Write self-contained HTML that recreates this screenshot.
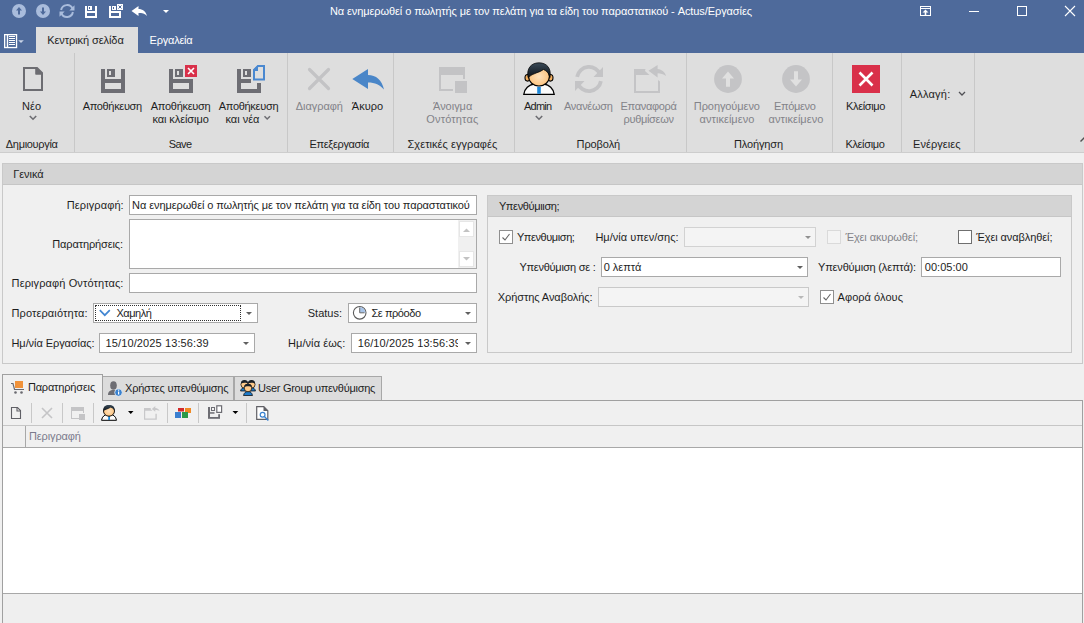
<!DOCTYPE html>
<html><head><meta charset="utf-8">
<style>
*{box-sizing:border-box;margin:0;padding:0}
html,body{width:1084px;height:623px;overflow:hidden;background:#f0f0f0;font-family:"Liberation Sans",sans-serif;font-size:11px;color:#1e1e1e}
.a{position:absolute}
.t{position:absolute;white-space:nowrap;line-height:13px;height:13px}
.c{text-align:center}
.dis{color:#8c8c8c}
.w{color:#fff}
svg{position:absolute;overflow:visible}
.sep{position:absolute;top:53px;width:1px;height:99px;background:#c8c8c8}
.gl{position:absolute;top:137px;line-height:13px;white-space:nowrap;text-align:center}
.inp{position:absolute;background:#fff;border:1px solid #a9a9a9}
.dd{position:absolute;width:0;height:0;border-left:4px solid transparent;border-right:4px solid transparent;border-top:4px solid #606060}
.cb{position:absolute;width:14px;height:14px;border:1px solid #8f8f8f;background:#fff}
</style></head><body>
<!-- title bar -->
<div class="a" style="left:0;top:0;width:1084px;height:53px;background:#4e6a9b"></div>
<svg width="1084" height="53" style="left:0;top:0">
 <circle cx="19" cy="11" r="7" fill="#a9bcdc"/>
 <path d="M19,7 L22,10.5 H20 V14.5 H18 V10.5 H16 Z" fill="#4e6a9b"/>
 <circle cx="43" cy="11" r="7" fill="#a9bcdc"/>
 <path d="M43,15 L46,11.5 H44 V7.5 H42 V11.5 H40 Z" fill="#4e6a9b"/>
 <g fill="none" stroke="#a9bcdc" stroke-width="2">
  <path d="M61.1,10 A6,6 0 0 1 72.6,8.95"/>
  <path d="M72.9,12.04 A6,6 0 0 1 61.4,13.05"/>
 </g>
 <path d="M74.5,5.2 V10.5 H69.3 Z" fill="#a9bcdc"/>
 <path d="M59.5,16.8 V11.5 H64.7 Z" fill="#a9bcdc"/>
 <g fill="#fff">
  <rect x="85" y="6" width="2" height="12"/><rect x="95" y="6" width="2" height="12"/>
  <rect x="87" y="11" width="8" height="2"/><rect x="87" y="16" width="8" height="2"/>
  <rect x="88" y="6" width="4" height="4"/>
 </g>
 <rect x="89" y="7" width="1" height="2" fill="#4e6a9b"/>
 <g fill="#fff">
  <rect x="109" y="6" width="2" height="12"/><rect x="119" y="11" width="2" height="7"/>
  <rect x="111" y="11" width="8" height="2"/><rect x="111" y="16" width="8" height="2"/>
  <rect x="112" y="6" width="4" height="4"/>
  <rect x="117" y="4" width="6" height="6"/>
 </g>
 <rect x="113" y="7" width="1" height="2" fill="#4e6a9b"/>
 <path d="M118.5,5.5 L121.5,8.5 M121.5,5.5 L118.5,8.5" stroke="#4e6a9b" stroke-width="1"/>
 <path d="M131.5,11 L138.5,6 V9 C142.5,9 146,11.5 147,16 C145,13.5 142,13 138.5,13 V16 Z" fill="#fff"/>
 <path d="M163,10 H169 L166,13 Z" fill="#fff"/>
 <!-- right -->
 <rect x="920.5" y="6.5" width="10" height="9" fill="none" stroke="#fff" stroke-width="1"/>
 <rect x="920" y="8" width="11" height="1" fill="#fff"/>
 <path d="M925.5,9.5 L928.5,12.5 H926.3 V15 H924.7 V12.5 H922.5 Z" fill="#fff"/>
 <rect x="969" y="11" width="10" height="1" fill="#fff"/>
 <rect x="1017.5" y="6.5" width="9" height="9" fill="none" stroke="#fff" stroke-width="1"/>
 <path d="M1065,6 L1075,16 M1075,6 L1065,16" stroke="#fff" stroke-width="1.1"/>
 <!-- app menu -->
 <rect x="4.65" y="34.65" width="11.9" height="12.9" fill="none" stroke="#fff" stroke-width="1.3"/>
 <rect x="6.8" y="35" width="1.4" height="12.5" fill="#fff"/>
 <g fill="#fff"><rect x="9" y="36" width="6" height="1"/><rect x="9" y="38" width="6" height="1"/><rect x="9" y="40" width="6" height="1"/><rect x="9" y="42" width="6" height="1"/><rect x="9" y="44" width="6" height="1"/></g>
 <path d="M18.2,40.2 H23.8 L21,43 Z" fill="#c8d3e6"/>
</svg>

<!-- tabs -->
<div class="a" style="left:36px;top:27px;width:102px;height:26px;background:#dedede"></div>
<!-- ribbon -->
<div class="a" style="left:0;top:53px;width:1084px;height:99px;background:#dedede"></div>
<div class="a" style="left:0;top:152px;width:1084px;height:1px;background:#cdcdcd"></div>
<!-- ribbon separators -->
<div class="sep" style="left:74px"></div>
<div class="sep" style="left:287px"></div>
<div class="sep" style="left:393px"></div>
<div class="sep" style="left:514px"></div>
<div class="sep" style="left:686px"></div>
<div class="sep" style="left:832px"></div>
<div class="sep" style="left:901px"></div>
<div class="sep" style="left:974px"></div>
<svg width="1084" height="160" style="left:0;top:0">
 <!-- New page -->
 <path d="M24,68 H37 L42,73 V90 H24 Z" fill="none" stroke="#6d6d72" stroke-width="2"/>
 <path d="M36,68 L42,74 H36 Z" fill="#6d6d72" stroke="#6d6d72" stroke-width="1.6" stroke-linejoin="round"/>
 <polyline points="29.8,116 33,119.2 36.2,116" fill="none" stroke="#6d6d72" stroke-width="1.6"/>
 <!-- Save -->
 <g fill="#6d6d73">
  <rect x="101" y="69" width="4" height="24"/><rect x="121" y="69" width="4" height="24"/>
  <rect x="105" y="79" width="16" height="4"/><rect x="105" y="89" width="16" height="4"/>
  <rect x="107" y="69" width="8" height="8"/>
 </g>
 <rect x="109" y="71" width="2" height="4" fill="#dedede"/>
 <!-- Save & close -->
 <g fill="#6d6d73">
  <rect x="169" y="69" width="4" height="24"/><rect x="189" y="79" width="4" height="14"/>
  <rect x="173" y="79" width="16" height="4"/><rect x="173" y="89" width="16" height="4"/>
  <rect x="175" y="69" width="8" height="8"/>
 </g>
 <rect x="177" y="71" width="2" height="4" fill="#dedede"/>
 <rect x="185" y="65" width="12" height="12" fill="#d9304a"/>
 <path d="M188,68 L194,74 M194,68 L188,74" stroke="#fff" stroke-width="1.6"/>
 <!-- Save & new -->
 <g fill="#6d6d73">
  <rect x="237" y="69" width="4" height="24"/><rect x="257" y="83" width="4" height="10"/>
  <rect x="241" y="79" width="10" height="4"/><rect x="241" y="89" width="16" height="4"/>
  <rect x="243" y="69" width="8" height="8"/>
 </g>
 <rect x="245" y="71" width="2" height="4" fill="#dedede"/>
 <path d="M258,66 H264 V79.5 H254 V70 Z" fill="#dedede" stroke="#4a88d0" stroke-width="2"/>
 <path d="M253,70 L258,65 V71 H253 Z" fill="#4a88d0"/>
 <polyline points="264.5,116.3 267.2,119 270,116.3" fill="none" stroke="#6d6d72" stroke-width="1.5"/>
 <!-- Delete X -->
 <path d="M309.5,69.5 L328.5,88.5 M328.5,69.5 L309.5,88.5" stroke="#c3c3c5" stroke-width="3.2" stroke-linecap="round"/>
 <!-- Undo -->
 <path d="M352.3,79 L368,69 V75 C376,75 382,80 384,89.5 C380,85 375,82.5 368,82.5 V89 Z" fill="#4a86c8"/>
 <!-- Open entity -->
 <g fill="#c3c3c5">
  <rect x="439" y="67" width="26" height="8"/><rect x="439" y="75" width="2" height="16"/>
  <rect x="441" y="89" width="12" height="2"/><rect x="463" y="75" width="2" height="4"/>
  <rect x="455" y="81" width="12" height="12"/>
 </g>
 <!-- Admin -->
 <defs>
  <radialGradient id="face" cx="0.5" cy="0.5" r="0.6"><stop offset="0" stop-color="#ffe2bd"/><stop offset="0.7" stop-color="#fdc98a"/><stop offset="1" stop-color="#f0a24a"/></radialGradient>
  <linearGradient id="hair" x1="0" y1="0" x2="0" y2="1"><stop offset="0" stop-color="#3a4a58"/><stop offset="1" stop-color="#0d1218"/></linearGradient>
 </defs>
 <path d="M523.8,94.3 C524.5,88.5 529,84.8 534,84 H544 C549,84.8 553.5,88.5 554.2,94.3 Z" fill="#fbfbfb" stroke="#000" stroke-width="1.3"/>
 <path d="M533.5,84.3 L539,87.5 L544.5,84.3" fill="none" stroke="#c8d4e0" stroke-width="0.8"/>
 <rect x="537.2" y="86.8" width="3.6" height="7" fill="#1e88d8"/>
 <ellipse cx="527.6" cy="77.8" rx="2.6" ry="3.3" fill="#f4b060" stroke="#000" stroke-width="1.1"/>
 <ellipse cx="550.4" cy="77.8" rx="2.6" ry="3.3" fill="#f4b060" stroke="#000" stroke-width="1.1"/>
 <ellipse cx="539" cy="76.6" rx="10.4" ry="9.4" fill="url(#face)" stroke="#000" stroke-width="1.1"/>
 <path d="M528,77.5 C526.3,68 531.5,62.8 539,62.8 C546.5,62.8 551.7,68 550,77.5 C549.2,73.5 547,71 543.5,69.5 C540,72.5 533,73 528,77.5 Z" fill="url(#hair)" stroke="#000" stroke-width="0.7"/>
 <polyline points="535.8,116 539,119.2 542.2,116" fill="none" stroke="#6d6d72" stroke-width="1.6"/>
 <!-- Refresh disabled -->
 <g fill="none" stroke="#c4c4c6" stroke-width="3.8">
  <path d="M577.1,76.9 A12.1,12.1 0 0 1 600.4,74.9"/>
  <path d="M600.9,81.1 A12.1,12.1 0 0 1 577.6,83.1"/>
 </g>
 <path d="M603,67 V77 H593.5 Z" fill="#c4c4c6"/>
 <path d="M575,91 V81 H584.5 Z" fill="#c4c4c6"/>
 <!-- Layout reset -->
 <g fill="#c4c4c6">
  <path d="M634,69 H645.5 L645,71 L649.5,75 H636 V91 H658 V80 L660,81.5 V93 H634 Z"/>
  <path d="M648.5,70.7 L657.6,65 V69 C662,69.5 665,72 666,76 C663.5,74 660.5,73.2 657.6,73.2 V77.5 Z"/>
 </g>
 <!-- Prev / next -->
 <circle cx="728" cy="79" r="13.9" fill="#c4c4c6"/>
 <path d="M728,71.6 L734,78.6 H730 V86.8 H726 V78.6 H722 Z" fill="#e0e0e0"/>
 <circle cx="796" cy="79" r="13.9" fill="#c4c4c6"/>
 <path d="M796,86.4 L802,79.4 H798 V71.2 H794 V79.4 H790 Z" fill="#e0e0e0"/>
 <!-- Close -->
 <rect x="852" y="65" width="28" height="28" fill="#d9304a"/>
 <path d="M859.5,72.5 L872.5,85.5 M872.5,72.5 L859.5,85.5" stroke="#fff" stroke-width="2.6"/>
 <!-- Allagi chevron -->
 <polyline points="959,92 962,95 965,92" fill="none" stroke="#505055" stroke-width="1.3"/>
 <!-- collapse -->
 <path d="M1080.5,141.5 L1085,137" fill="none" stroke="#505050" stroke-width="1.5"/>
</svg>

<!-- left groupbox -->
<div class="a" style="left:2px;top:163px;width:1081px;height:201px;border:1px solid #c9c9c9;background:#f0f0f0"></div>
<div class="a" style="left:2px;top:163px;width:1081px;height:22px;background:#d4d4d4;border:1px solid #c9c9c9;border-bottom-color:#c6c6c6"></div>
<div class="inp" style="left:129px;top:195px;width:348px;height:20px"></div>
<div class="inp" style="left:129px;top:219px;width:348px;height:50px"></div>
<div class="a" style="left:458px;top:220px;width:18px;height:48px;background:#f0f0f0"></div>
<div class="a" style="left:459px;top:221px;width:15px;height:16px;background:#fff;border:1px solid #e6e6e6"></div>
<div class="a" style="left:459px;top:251px;width:15px;height:16px;background:#fff;border:1px solid #e6e6e6"></div>
<svg width="20" height="50" style="left:458px;top:219px">
 <path d="M5,13 H12 L8.5,9.5 Z" fill="#c2c2c2"/>
 <path d="M5,38 H12 L8.5,41.5 Z" fill="#c2c2c2"/>
</svg>
<div class="inp" style="left:129px;top:273px;width:348px;height:20px"></div>
<div class="inp" style="left:93px;top:303px;width:165px;height:20px"></div>
<div class="a" style="left:95px;top:305px;width:146px;height:16px;border:1px dotted #303030"></div>
<svg width="20" height="20" style="left:93px;top:303px">
 <polyline points="6.8,7.2 11.8,12.2 16.8,7.2" fill="none" stroke="#4286d2" stroke-width="1.7"/>
</svg>
<div class="dd" style="left:246px;top:312px;border-left-width:3.5px;border-right-width:3.5px;border-top-width:3px"></div>
<div class="inp" style="left:99px;top:333px;width:156px;height:20px"></div>
<div class="dd" style="left:243px;top:342px;border-left-width:3.5px;border-right-width:3.5px;border-top-width:3px"></div>
<div class="inp" style="left:348px;top:303px;width:129px;height:20px"></div>
<svg width="20" height="20" style="left:348px;top:303px">
 <circle cx="11.7" cy="9.8" r="6.3" fill="#fff" stroke="#5a5a5a" stroke-width="1.1"/>
 <path d="M11.7,4 A5.8,5.8 0 0 1 17.5,9.8 H11.7 Z" fill="#a8c4e8"/>
 <path d="M11.7,4.5 V9.8 H16.5" fill="none" stroke="#6a6a6a" stroke-width="1"/>
</svg>
<div class="dd" style="left:465px;top:312px;border-left-width:3.5px;border-right-width:3.5px;border-top-width:3px"></div>
<div class="inp" style="left:351px;top:333px;width:126px;height:20px;overflow:hidden"></div>
<div class="dd" style="left:465px;top:342px;border-left-width:3.5px;border-right-width:3.5px;border-top-width:3px"></div>

<!-- right groupbox -->
<div class="a" style="left:487px;top:195px;width:585px;height:158px;border:1px solid #c9c9c9;background:#f0f0f0"></div>
<div class="a" style="left:487px;top:195px;width:585px;height:22px;background:#d4d4d4;border:1px solid #c9c9c9;border-bottom-color:#c6c6c6"></div>
<div class="cb" style="left:499px;top:230px"></div>
<svg width="14" height="14" style="left:499px;top:230px"><polyline points="3.5,7.5 6,10 10.5,4" fill="none" stroke="#666" stroke-width="1.1"/></svg>
<div class="a" style="left:684px;top:227px;width:132px;height:20px;border:1px solid #d2d2d2;background:#f4f4f4"></div>
<div class="dd" style="left:805px;top:236px;border-left-width:3.5px;border-right-width:3.5px;border-top-width:3px;border-top-color:#909090"></div>
<div class="cb" style="left:827px;top:230px;border-color:#dadada;background:#f4f4f4"></div>
<div class="cb" style="left:958px;top:230px;border-color:#6f6f6f"></div>
<div class="inp" style="left:601px;top:257px;width:207px;height:20px"></div>
<div class="dd" style="left:797px;top:266px;border-left-width:3.5px;border-right-width:3.5px;border-top-width:3px"></div>
<div class="inp" style="left:921px;top:257px;width:140px;height:20px"></div>
<div class="a" style="left:598px;top:287px;width:211px;height:20px;border:1px solid #c9c9c9;background:#f4f4f4"></div>
<div class="dd" style="left:798px;top:296px;border-left-width:3.5px;border-right-width:3.5px;border-top-width:3px;border-top-color:#b8b8b8"></div>
<div class="cb" style="left:820px;top:290px"></div>
<svg width="14" height="14" style="left:820px;top:290px"><polyline points="3.5,7.5 6,10 10.5,4" fill="none" stroke="#666" stroke-width="1.1"/></svg>

<!-- tab page -->
<div class="a" style="left:102px;top:376px;width:132px;height:25px;background:#dcdcdc;border:1px solid #a8a8a8"></div>
<div class="a" style="left:234px;top:376px;width:148px;height:25px;background:#dcdcdc;border:1px solid #a8a8a8"></div>
<div class="a" style="left:2px;top:400px;width:1081px;height:223px;background:#f0f0f0;border:1px solid #a0a0a0;border-bottom:none"></div>
<div class="a" style="left:2px;top:374px;width:101px;height:27px;background:#f0f0f0;border:1px solid #a0a0a0;border-bottom:none"></div>
<!-- toolbar separators -->
<div class="a" style="left:31px;top:403px;width:1px;height:20px;background:#c8c8c8"></div>
<div class="a" style="left:62px;top:403px;width:1px;height:20px;background:#c8c8c8"></div>
<div class="a" style="left:93px;top:403px;width:1px;height:20px;background:#c8c8c8"></div>
<div class="a" style="left:167px;top:403px;width:1px;height:20px;background:#c8c8c8"></div>
<div class="a" style="left:198px;top:403px;width:1px;height:20px;background:#c8c8c8"></div>
<div class="a" style="left:246px;top:403px;width:1px;height:20px;background:#c8c8c8"></div>
<!-- grid -->
<div class="a" style="left:3px;top:425px;width:1079px;height:1px;background:#c6c6c6"></div>
<div class="a" style="left:3px;top:447px;width:1079px;height:1px;background:#a8a8a8"></div>
<div class="a" style="left:25px;top:426px;width:1px;height:21px;background:#a8a8a8"></div>
<div class="a" style="left:3px;top:448px;width:1079px;height:145px;background:#fff"></div>
<div class="a" style="left:3px;top:593px;width:1079px;height:1px;background:#a8a8a8"></div>
<div class="a" style="left:3px;top:594px;width:1079px;height:29px;background:#efefef"></div>
<svg width="1084" height="623" style="left:0;top:0">
 <!-- cart -->
 <rect x="15" y="381" width="8" height="7" fill="#f0923a"/>
 <path d="M11,383.5 H13 L14.5,389.5 H24" fill="none" stroke="#6a6a70" stroke-width="1.2"/>
 <circle cx="15.5" cy="392.5" r="1.3" fill="#6a6a70"/><circle cx="21.5" cy="392.5" r="1.3" fill="#6a6a70"/>
 <!-- user info -->
 <ellipse cx="113.5" cy="385.5" rx="3.3" ry="4.3" fill="#6d6d73"/>
 <path d="M108,395 C108,391.5 110,390 113.5,390 C117,390 119,391.5 119,395 Z" fill="#6d6d73"/>
 <circle cx="118.5" cy="392.5" r="3.8" fill="#3a82d0" stroke="#f0f0f0" stroke-width="0.8"/>
 <rect x="118" y="391.5" width="1.2" height="3" fill="#fff"/><rect x="118" y="389.6" width="1.2" height="1.1" fill="#fff"/>
 <!-- group icon -->
 <g stroke="#000" stroke-width="0.7">
  <path d="M240.5,391 C241,388.5 243,387.5 244.5,387.5 C246,387.5 248,388.5 248.5,391 Z" fill="#1e7ac8"/>
  <path d="M247.5,391 C248,388.5 250,387.5 251.5,387.5 C253,387.5 255,388.5 255.5,391 Z" fill="#1e7ac8"/>
  <circle cx="244.5" cy="384.5" r="3.6" fill="#fdc98a"/>
  <circle cx="251.5" cy="384.5" r="3.6" fill="#fdc98a"/>
  <path d="M243.5,395.5 C244,392.5 246,391.5 248,391.5 C250,391.5 252,392.5 252.5,395.5 Z" fill="#1e7ac8"/>
  <circle cx="248" cy="388" r="3.8" fill="#fdc98a"/>
 </g>
 <path d="M241,383.5 C241,380.5 243,380 244.5,380 C246,380 248,380.5 248,383.5 C246.5,382.5 243,382.5 241,383.5 Z" fill="#1a2028"/>
 <path d="M248,383.5 C248,380.5 250,380 251.5,380 C253,380 255,380.5 255,383.5 C253.5,382.5 250,382.5 248,383.5 Z" fill="#1a2028"/>
 <path d="M244.2,387 C244.2,384.5 246,384 248,384 C250,384 251.8,384.5 251.8,387 C250,386 246,386 244.2,387 Z" fill="#1a2028"/>
 <!-- toolbar icons -->
 <path d="M11.5,407.5 H17.5 L20.5,410.5 V418.5 H11.5 Z" fill="none" stroke="#606066" stroke-width="1.1"/>
 <path d="M17,407.5 V411 H20.5" fill="none" stroke="#606066" stroke-width="1.1"/>
 <path d="M42,408 L52,418 M52,408 L42,418" stroke="#c4c4c6" stroke-width="1.6"/>
 <g fill="#c4c4c6">
  <rect x="71" y="407" width="13" height="4"/><rect x="71" y="411" width="1" height="8"/><rect x="72" y="418" width="7" height="1"/><rect x="83" y="411" width="1" height="2"/>
  <rect x="79" y="414" width="6" height="6"/>
 </g>
 <!-- small admin -->
 <path d="M101.5,420.3 C102,416.5 105,414.5 107.5,414.3 H110.5 C113,414.5 116,416.5 116.5,420.3 Z" fill="#fbfbfb" stroke="#000" stroke-width="1"/>
 <rect x="108.2" y="416" width="1.8" height="4" fill="#1e88d8"/>
 <ellipse cx="109" cy="411" rx="5.5" ry="5.2" fill="url(#face)" stroke="#000" stroke-width="0.9"/>
 <path d="M103.3,411 C103,406.5 105.5,405 109,405 C112.5,405 115,406.5 114.7,411 C113.5,408.5 112,408 110.5,407.5 C109,409 106,409.5 103.3,411 Z" fill="url(#hair)"/>
 <path d="M128,411 H133.5 L130.75,414 Z" fill="#000"/>
 <g fill="#c8c8ca">
  <path d="M144,408 H151 L150.5,409 L152.5,410.8 H145.2 V418.4 H155.4 V413.8 H156.8 V419.7 H144 Z"/>
  <path d="M151.8,409 L155.3,406 V408 C157.5,408.3 159,409.2 159.6,411 C158.3,410.2 156.8,410 155.3,410 V411.7 Z"/>
 </g>
 <rect x="178" y="408" width="6" height="3.5" fill="#d42a2a"/>
 <rect x="185" y="408" width="6" height="5" fill="#f08a24"/>
 <rect x="175" y="412" width="6" height="6" fill="#3a7fd0"/>
 <rect x="182" y="412" width="6" height="6" fill="#2a9a48"/>
 <g fill="#6d6d73">
  <rect x="208" y="407" width="2" height="11.8"/><rect x="210" y="412.2" width="4.5" height="1.5"/><rect x="210" y="417" width="10" height="1.8"/><rect x="218.2" y="414.2" width="1.8" height="3"/>
 </g>
 <rect x="211.5" y="407.5" width="3" height="3" fill="#f4f4f4" stroke="#6d6d73" stroke-width="1"/>
 <rect x="216.8" y="405.8" width="4.8" height="6.6" fill="#fff" stroke="#6d6d73" stroke-width="1.2"/>
 <path d="M232.5,411 H238.3 L235.4,414 Z" fill="#000"/>
 <path d="M256.7,406.7 H263.8 L267.8,410.7 V419.3 H256.7 Z" fill="#fff" stroke="#606066" stroke-width="1.2"/>
 <path d="M263.5,406.2 L268.3,411 H263.5 Z" fill="#606066"/>
 <circle cx="262.6" cy="414.8" r="2.4" fill="#fff" stroke="#3a82d0" stroke-width="1.2"/>
 <path d="M264.4,416.6 L268.3,420.5" stroke="#3a82d0" stroke-width="1.4"/>
</svg>

<div class="t" style="left:329.90px;top:5px;color:#ffffff;letter-spacing:-0.084px">Να ενημερωθεί ο πωλητής με τον πελάτη για τα είδη του παραστατικού - Actus/Εργασίες</div>
<div class="t" style="left:47.20px;top:34px;color:#1e1e1e;letter-spacing:-0.071px">Κεντρική σελίδα</div>
<div class="t" style="left:149.60px;top:34px;color:#ffffff;letter-spacing:-0.229px">Εργαλεία</div>
<div class="t" style="left:22.00px;top:100px;color:#1e1e1e;letter-spacing:0.100px">Νέο</div>
<div class="t" style="left:5.80px;top:138px;color:#1e1e1e;letter-spacing:-0.311px">Δημιουργία</div>
<div class="t" style="left:82.70px;top:100px;color:#1e1e1e;letter-spacing:-0.333px">Αποθήκευση</div>
<div class="t" style="left:150.70px;top:100px;color:#1e1e1e;letter-spacing:-0.267px">Αποθήκευση</div>
<div class="t" style="left:152.50px;top:113px;color:#1e1e1e;letter-spacing:-0.091px">και κλείσιμο</div>
<div class="t" style="left:218.70px;top:100px;color:#1e1e1e;letter-spacing:-0.289px">Αποθήκευση</div>
<div class="t" style="left:225.50px;top:113px;color:#1e1e1e;letter-spacing:-0.017px">και νέα</div>
<div class="t" style="left:168.80px;top:138px;color:#1e1e1e;letter-spacing:-0.600px">Save</div>
<div class="t" style="left:295.80px;top:100px;color:#838389;letter-spacing:-0.057px">Διαγραφή</div>
<div class="t" style="left:351.80px;top:100px;color:#1e1e1e;letter-spacing:0.050px">Άκυρο</div>
<div class="t" style="left:309.60px;top:138px;color:#1e1e1e;letter-spacing:-0.350px">Επεξεργασία</div>
<div class="t" style="left:433.00px;top:100px;color:#838389;letter-spacing:-0.017px">Άνοιγμα</div>
<div class="t" style="left:426.30px;top:113px;color:#838389;letter-spacing:0.163px">Οντότητας</div>
<div class="t" style="left:407.50px;top:138px;color:#1e1e1e;letter-spacing:0.056px">Σχετικές εγγραφές</div>
<div class="t" style="left:523.90px;top:100px;color:#1e1e1e;letter-spacing:-0.725px">Admin</div>
<div class="t" style="left:564.00px;top:100px;color:#838389;letter-spacing:-0.286px">Ανανέωση</div>
<div class="t" style="left:620.50px;top:100px;color:#838389;letter-spacing:-0.312px">Επαναφορά</div>
<div class="t" style="left:623.50px;top:113px;color:#838389;letter-spacing:-0.312px">ρυθμίσεων</div>
<div class="t" style="left:576.60px;top:138px;color:#1e1e1e;letter-spacing:-0.100px">Προβολή</div>
<div class="t" style="left:693.80px;top:100px;color:#838389;letter-spacing:-0.080px">Προηγούμενο</div>
<div class="t" style="left:699.60px;top:113px;color:#838389;letter-spacing:0.040px">αντικείμενο</div>
<div class="t" style="left:774.00px;top:100px;color:#838389;letter-spacing:-0.333px">Επόμενο</div>
<div class="t" style="left:768.60px;top:113px;color:#838389;letter-spacing:0.040px">αντικείμενο</div>
<div class="t" style="left:734.00px;top:138px;color:#1e1e1e;letter-spacing:-0.143px">Πλοήγηση</div>
<div class="t" style="left:846.10px;top:100px;color:#1e1e1e;letter-spacing:-0.371px">Κλείσιμο</div>
<div class="t" style="left:845.40px;top:138px;color:#1e1e1e;letter-spacing:-0.343px">Κλείσιμο</div>
<div class="t" style="left:909.70px;top:88px;color:#1e1e1e;letter-spacing:0.217px">Αλλαγή:</div>
<div class="t" style="left:913.00px;top:138px;color:#1e1e1e;letter-spacing:0.062px">Ενέργειες</div>
<div class="t" style="left:13.20px;top:168px;color:#1e1e1e;letter-spacing:-0.040px">Γενικά</div>
<div class="t" style="left:66.80px;top:199px;color:#1e1e1e;letter-spacing:0.100px">Περιγραφή:</div>
<div class="t" style="left:52.30px;top:238px;color:#1e1e1e;letter-spacing:-0.133px">Παρατηρήσεις:</div>
<div class="t" style="left:11.60px;top:277px;color:#1e1e1e;letter-spacing:0.111px">Περιγραφή Οντότητας:</div>
<div class="t" style="left:132.10px;top:199px;color:#1e1e1e;letter-spacing:-0.094px">Να ενημερωθεί ο πωλητής με τον πελάτη για τα είδη του παραστατικού</div>
<div class="t" style="left:11.50px;top:307px;color:#1e1e1e;letter-spacing:0.115px">Προτεραιότητα:</div>
<div class="t" style="left:116.50px;top:307px;color:#1e1e1e;letter-spacing:-0.500px">Χαμηλή</div>
<div class="t" style="left:11.50px;top:337px;color:#1e1e1e;letter-spacing:-0.073px">Ημ/νία Εργασίας:</div>
<div class="t" style="left:105.50px;top:337px;color:#1e1e1e;letter-spacing:0.122px">15/10/2025 13:56:39</div>
<div class="t" style="left:307.80px;top:307px;color:#1e1e1e;letter-spacing:-0.017px">Status:</div>
<div class="t" style="left:371.40px;top:307px;color:#1e1e1e;letter-spacing:-0.425px">Σε πρόοδο</div>
<div class="t" style="left:288.00px;top:337px;color:#1e1e1e;letter-spacing:0.070px">Ημ/νία έως:</div>
<div class="t" style="left:357.70px;top:337px;color:#1e1e1e;letter-spacing:0.122px;width:100px;overflow:hidden">16/10/2025 13:56:39</div>
<div class="t" style="left:498.90px;top:200px;color:#1e1e1e;letter-spacing:-0.355px">Υπενθύμιιση;</div>
<div class="t" style="left:516.90px;top:231px;color:#1e1e1e;letter-spacing:-0.420px">Υπενθυμιση;</div>
<div class="t" style="left:595.40px;top:231px;color:#1e1e1e;letter-spacing:0.013px">Ημ/νία υπεν/σης:</div>
<div class="t" style="left:845.40px;top:231px;color:#838389;letter-spacing:-0.108px">Έχει ακυρωθεί;</div>
<div class="t" style="left:976.20px;top:231px;color:#1e1e1e;letter-spacing:-0.086px">Έχει αναβληθεί;</div>
<div class="t" style="left:519.40px;top:261px;color:#1e1e1e;letter-spacing:-0.257px">Υπενθύμιση σε :</div>
<div class="t" style="left:603.70px;top:261px;color:#1e1e1e;letter-spacing:-0.017px">0 λεπτά</div>
<div class="t" style="left:818.00px;top:261px;color:#1e1e1e;letter-spacing:-0.167px">Υπενθύμιση (λεπτά):</div>
<div class="t" style="left:924.80px;top:261px;color:#1e1e1e;letter-spacing:0.029px">00:05:00</div>
<div class="t" style="left:497.70px;top:291px;color:#1e1e1e;letter-spacing:-0.069px">Χρήστης Αναβολής:</div>
<div class="t" style="left:837.60px;top:291px;color:#1e1e1e;letter-spacing:0.040px">Αφορά όλους</div>
<div class="t" style="left:27.90px;top:381px;color:#1e1e1e;letter-spacing:-0.173px">Παρατηρήσεις</div>
<div class="t" style="left:125.00px;top:382px;color:#1e1e1e;letter-spacing:-0.206px">Χρήστες υπενθύμισης</div>
<div class="t" style="left:258.00px;top:382px;color:#1e1e1e;letter-spacing:-0.271px">User Group υπενθύμισης</div>
<div class="t" style="left:29.00px;top:430px;color:#7b7b8c;letter-spacing:-0.125px">Περιγραφή</div>
</body></html>
